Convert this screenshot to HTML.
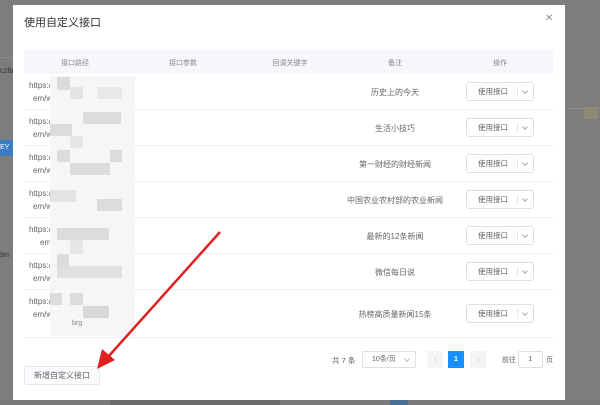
<!DOCTYPE html>
<html><head><meta charset="utf-8"><style>
*{margin:0;padding:0;box-sizing:border-box}
body{width:600px;height:405px;overflow:hidden;background:#7d7d7d;font-family:"Liberation Sans","Noto Sans CJK SC",sans-serif;position:relative;color:#606266;font-size:7.5px}
.a{position:absolute}
.modal{left:13px;top:5px;width:552px;height:395px;background:#fff}
.title{left:24px;top:14px;font-size:11px;color:#303133}
.x{left:545px;top:13px;font-size:10px;color:#909399}
.hdr{left:24px;top:50px;width:529px;height:24px;background:#f5f7fa}
.h{top:58px;font-size:7px;color:#888;width:100px;text-align:center}
.line{left:24px;width:529px;height:1px;background:#ebeef5}
.u{left:29px;font-size:8px;color:#666}
.rm{width:130px;text-align:center;left:330px;font-size:8px;color:#666}
.dd{left:466px;width:68px;height:19px;border:1px solid #dcdfe6;border-radius:3px;font-size:7.5px;color:#606266;padding-left:11px;line-height:17px}
.dd:after{content:"";position:absolute;left:50px;top:4px;width:1px;height:9px;background:#e4e7ed}
.dd span{position:absolute;left:56px;top:6px;width:4px;height:4px;border-right:1px solid #aaa;border-bottom:1px solid #aaa;transform:rotate(45deg)}
.m{background:#dcdcdc}
</style></head><body>
<div class="a" style="left:0;top:57px;width:13px;height:1px;background:#8a8a8a"></div>
<div class="a" style="left:0;top:68px;font-size:7px;color:#333">c2fb</div>
<div class="a" style="left:0;top:140px;width:13px;height:16px;background:#3b7dc4;color:#fff;font-size:7px;line-height:16px">EY</div>
<div class="a" style="left:0;top:252px;font-size:7px;color:#333">9m</div>
<div class="a" style="left:0;top:400px;width:600px;height:5px;background:#7a7a7a"></div>
<div class="a" style="left:110px;top:399px;width:170px;height:6px;background:#6b6b6b"></div>
<div class="a" style="left:390px;top:400px;width:18px;height:5px;background:#4a6f95"></div>
<div class="a" style="left:566px;top:108px;width:34px;height:1px;background:#8c8c8c"></div>
<div class="a" style="left:584px;top:107px;width:14px;height:12px;background:#8f8a74"></div>

<div class="a modal"></div>
<div class="a title">使用自定义接口</div>
<div class="a x">✕</div>
<div class="a hdr"></div>
<div class="a h" style="left:25px">接口路径</div>
<div class="a h" style="left:133px">接口参数</div>
<div class="a h" style="left:240px">回调关键字</div>
<div class="a h" style="left:345px">备注</div>
<div class="a h" style="left:450px">操作</div>

<div class="a line" style="top:109px"></div>
<div class="a line" style="top:145px"></div>
<div class="a line" style="top:181px"></div>
<div class="a line" style="top:217px"></div>
<div class="a line" style="top:253px"></div>
<div class="a line" style="top:289px"></div>
<div class="a line" style="top:337px"></div>

<div class="a u" style="top:81px">https:/</div><div class="a u" style="top:94px;left:33px">em/w</div>
<div class="a u" style="top:117px">https:/</div><div class="a u" style="top:130px;left:33px">em/w</div>
<div class="a u" style="top:153px">https:/</div><div class="a u" style="top:166px;left:33px">em/w</div>
<div class="a u" style="top:189px">https:/</div><div class="a u" style="top:202px;left:33px">em/w</div>
<div class="a u" style="top:225px">https:/</div><div class="a u" style="top:238px;left:40px">em</div>
<div class="a u" style="top:261px">https:/</div><div class="a u" style="top:274px;left:33px">em/w</div>
<div class="a u" style="top:297px">https:/</div><div class="a u" style="top:310px;left:33px">em/w</div>

<div class="a" style="left:50px;top:76px;width:85px;height:260px;background:#f6f6f6"></div>
<div class="a m" style="left:57px;top:77px;width:13px;height:13px"></div>
<div class="a m" style="left:70px;top:87px;width:13px;height:12px;background:#e4e4e4"></div>
<div class="a m" style="left:97px;top:87px;width:25px;height:12px;background:#e8e8e8"></div>
<div class="a m" style="left:83px;top:112px;width:38px;height:12px"></div>
<div class="a m" style="left:50px;top:124px;width:22px;height:12px"></div>
<div class="a m" style="left:70px;top:136px;width:13px;height:12px;background:#e6e6e6"></div>
<div class="a m" style="left:57px;top:150px;width:13px;height:12px"></div>
<div class="a m" style="left:110px;top:150px;width:12px;height:12px"></div>
<div class="a m" style="left:70px;top:163px;width:40px;height:12px"></div>
<div class="a m" style="left:50px;top:190px;width:26px;height:12px;background:#e3e3e3"></div>
<div class="a m" style="left:97px;top:199px;width:25px;height:12px"></div>
<div class="a m" style="left:57px;top:228px;width:52px;height:12px"></div>
<div class="a m" style="left:70px;top:240px;width:13px;height:14px;background:#e6e6e6"></div>
<div class="a m" style="left:57px;top:254px;width:12px;height:12px"></div>
<div class="a m" style="left:57px;top:266px;width:65px;height:12px;background:#e0e0e0"></div>
<div class="a m" style="left:50px;top:293px;width:12px;height:12px"></div>
<div class="a m" style="left:70px;top:293px;width:13px;height:12px"></div>
<div class="a m" style="left:83px;top:306px;width:26px;height:12px;background:#d8d8d8"></div>
<div class="a" style="left:72px;top:320px;font-size:7px;color:#888">brg</div>

<div class="a rm" style="top:87px">历史上的今天</div>
<div class="a rm" style="top:123px">生活小技巧</div>
<div class="a rm" style="top:159px">第一财经的财经新闻</div>
<div class="a rm" style="top:195px">中国农业农村部的农业新闻</div>
<div class="a rm" style="top:231px">最新的12条新闻</div>
<div class="a rm" style="top:267px">微信每日说</div>
<div class="a rm" style="top:309px">热榜高质量新闻15条</div>

<div class="a dd" style="top:82px">使用接口<span></span></div>
<div class="a dd" style="top:118px">使用接口<span></span></div>
<div class="a dd" style="top:154px">使用接口<span></span></div>
<div class="a dd" style="top:190px">使用接口<span></span></div>
<div class="a dd" style="top:226px">使用接口<span></span></div>
<div class="a dd" style="top:262px">使用接口<span></span></div>
<div class="a dd" style="top:304px">使用接口<span></span></div>

<div class="a" style="left:332px;top:355px;font-size:7.5px">共 7 条</div>
<div class="a" style="left:362px;top:351px;width:54px;height:17px;border:1px solid #dcdfe6;border-radius:2px;font-size:7px;padding-left:9px;line-height:15px">10条/页<span style="position:absolute;left:42px;top:5px;width:4px;height:4px;border-right:1px solid #bbb;border-bottom:1px solid #bbb;transform:rotate(45deg)"></span></div>
<div class="a" style="left:427px;top:351px;width:16px;height:17px;background:#f4f4f5;color:#c0c4cc;text-align:center;line-height:17px;font-size:8px">‹</div>
<div class="a" style="left:448px;top:351px;width:16px;height:17px;background:#1890ff;color:#fff;text-align:center;line-height:17px;font-size:7px;font-weight:bold">1</div>
<div class="a" style="left:470px;top:351px;width:16px;height:17px;background:#f4f4f5;color:#c0c4cc;text-align:center;line-height:17px;font-size:8px">›</div>
<div class="a" style="left:502px;top:355px;font-size:7px">前往</div>
<div class="a" style="left:518px;top:351px;width:25px;height:17px;border:1px solid #dcdfe6;border-radius:2px;text-align:center;line-height:15px;font-size:7px">1</div>
<div class="a" style="left:546px;top:355px;font-size:7px">页</div>

<div class="a" style="left:24px;top:366px;width:76px;height:19px;border:1px solid #e4e7ed;border-radius:3px;background:#fbfcfe;font-size:8px;color:#606266;text-align:center;line-height:17px">新增自定义接口</div>

<svg class="a" style="left:0;top:0" width="600" height="405"><line x1="220" y1="232" x2="108" y2="357" stroke="#e02020" stroke-width="2.5"/><polygon points="97,369 102,349 115,360" fill="#e02020"/></svg>
</body></html>
